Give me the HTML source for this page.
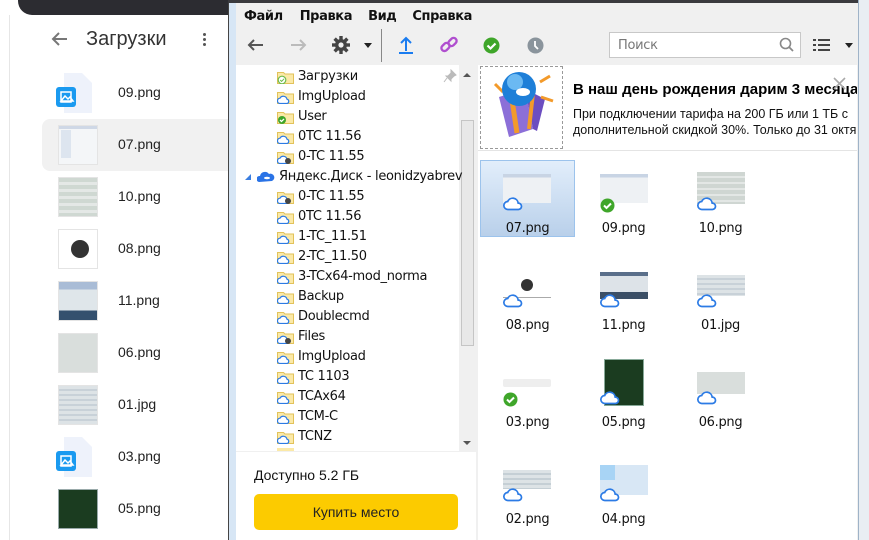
<!DOCTYPE html>
<html><head><meta charset="utf-8">
<style>
*{margin:0;padding:0;box-sizing:border-box}
body{width:869px;height:540px;overflow:hidden;background:#fff;font-family:"Liberation Sans","DejaVu Sans",sans-serif;position:relative}
.a{position:absolute}
.li{position:absolute;left:118px;font-size:14px;color:#222}
.th{position:absolute;left:58px;width:40px;height:40px;border:1px solid #e4e4e4}
.tr{position:absolute;left:298px;font-size:13px;color:#111;font-family:"DejaVu Sans",sans-serif;letter-spacing:-0.3px}
.fi{position:absolute;left:277px;width:17px;height:14px}
.gl{position:absolute;font-size:13px;color:#111;width:97px;text-align:center;font-family:"DejaVu Sans",sans-serif;letter-spacing:-0.3px}
.gt{position:absolute;width:48px}
.cb{position:absolute;width:20px;height:16px}
</style></head><body>
<div class="a" style="left:18px;top:0;width:212px;height:15px;background:#2c2c31;border-bottom-left-radius:14px"></div>
<div class="a" style="left:9px;top:15px;width:1px;height:525px;background:#e6e6e6"></div>
<svg class="a" style="left:50px;top:30px" width="20" height="18"><path d="M17 9H3M9 3L3 9l6 6" stroke="#777" stroke-width="2" fill="none"/></svg>
<div class="a" style="left:86px;top:28px;font-size:20px;color:#333">Загрузки</div>
<div class="a" style="left:203px;top:33px;width:3px;height:3px;background:#555;border-radius:2px;box-shadow:0 5px #555,0 10px #555"></div>
<div class="a" style="left:42px;top:119px;width:188px;height:52px;background:#f1f1f1;border-radius:8px 0 0 8px"></div>
<svg class="a" style="left:56px;top:73px" width="40" height="40"><path d="M8 0h18l10 10v30H8z" fill="#eef2fb"/><rect x="0" y="14" width="20" height="20" rx="3" fill="#1a9af0"/><path d="M5 28l4-5 3 3 2-2 3 4z M5 19h10v10H5z" fill="none" stroke="#fff" stroke-width="1.5"/></svg>
<div class="th" style="top:125px;background:linear-gradient(#cfd8e6 0 8%,#f4f6f8 8%);"><div style="margin:4px 2px;width:10px;height:28px;background:#dde5ef"></div></div>
<div class="th" style="top:177px;background:repeating-linear-gradient(#cfd8d2 0 4px,#e4e8e6 4px 7px)"></div>
<div class="th" style="top:229px;background:#fff"><div style="margin:10px 12px;width:18px;height:18px;border-radius:50%;background:#333"></div></div>
<div class="th" style="top:281px;background:linear-gradient(#a9bcd6 0 20%,#dfe6ea 20% 75%,#34506e 75%)"></div>
<div class="th" style="top:333px;background:#d9dedc"></div>
<div class="th" style="top:385px;background:repeating-linear-gradient(#dde3e6 0 3px,#c8d1d8 3px 5px)"></div>
<svg class="a" style="left:56px;top:437px" width="40" height="40"><path d="M8 0h18l10 10v30H8z" fill="#eef2fb"/><rect x="0" y="14" width="20" height="20" rx="3" fill="#1a9af0"/><path d="M5 28l4-5 3 3 2-2 3 4z M5 19h10v10H5z" fill="none" stroke="#fff" stroke-width="1.5"/></svg>
<div class="th" style="top:489px;background:#1b3c20;border-color:#9aa"></div>
<div class="li" style="top:84px">09.png</div>
<div class="li" style="top:136px">07.png</div>
<div class="li" style="top:188px">10.png</div>
<div class="li" style="top:240px">08.png</div>
<div class="li" style="top:292px">11.png</div>
<div class="li" style="top:344px">06.png</div>
<div class="li" style="top:396px">01.jpg</div>
<div class="li" style="top:448px">03.png</div>
<div class="li" style="top:500px">05.png</div>

<div class="a" style="left:228px;top:0;width:641px;height:540px;background:#d7e6f5;border-left:1px solid #444"></div>
<div class="a" style="left:228px;top:0;width:641px;height:3px;background:#3a3a3e"></div>
<div class="a" style="left:236px;top:3px;width:622px;height:537px;background:#f0f0f0"></div>
<div class="a" style="left:858px;top:0;width:11px;height:540px;background:#e9eef3;border-left:1px solid #9fb3c8"></div>
<div class="a" style="left:244px;top:9px;font-size:13px;font-weight:bold;color:#111;font-family:'DejaVu Sans',sans-serif;letter-spacing:-0.4px">Файл<span style="margin-left:17px">Правка</span><span style="margin-left:16px">Вид</span><span style="margin-left:16px">Справка</span></div>
<svg class="a" style="left:246px;top:37px" width="20" height="16"><path d="M17 8H3M8 3L3 8l5 5" stroke="#555" stroke-width="2" fill="none"/></svg>
<svg class="a" style="left:288px;top:37px" width="20" height="16"><path d="M3 8h14M12 3l5 5-5 5" stroke="#bbb" stroke-width="2" fill="none"/></svg>
<svg class="a" style="left:331px;top:35px" width="20" height="20"><g fill="#444"><circle cx="10" cy="10" r="6"/><rect x="8.3" y="1" width="3.4" height="18"/><rect x="1" y="8.3" width="18" height="3.4"/><rect x="8.3" y="1" width="3.4" height="18" transform="rotate(45 10 10)"/><rect x="8.3" y="1" width="3.4" height="18" transform="rotate(-45 10 10)"/></g><circle cx="10" cy="10" r="2.6" fill="#f0f0f0"/></svg>
<div class="a" style="left:364px;top:43px;border:4px solid transparent;border-top:5px solid #222"></div>
<div class="a" style="left:381px;top:29px;width:1px;height:33px;background:#888"></div>
<svg class="a" style="left:397px;top:35px" width="18" height="20"><path d="M9 16V3M4 8l5-5 5 5" stroke="#1a7cf0" stroke-width="2" fill="none"/><rect x="2" y="17" width="14" height="2" fill="#1a7cf0"/></svg>
<svg class="a" style="left:439px;top:35px" width="20" height="20"><g stroke="#b04fcf" stroke-width="2.4" fill="none"><rect x="2" y="9" width="9" height="6" rx="3" transform="rotate(-45 6.5 12)"/><rect x="9" y="4" width="9" height="6" rx="3" transform="rotate(-45 13.5 7)"/></g></svg>
<svg class="a" style="left:483px;top:37px" width="17" height="17"><circle cx="8.5" cy="8.5" r="8" fill="#3fa62a"/><path d="M4.5 8.5l3 3 5-5" stroke="#fff" stroke-width="2.2" fill="none"/></svg>
<svg class="a" style="left:527px;top:37px" width="17" height="17"><circle cx="8.5" cy="8.5" r="8" fill="#8a949c"/><path d="M8 4v5l3 3" stroke="#fff" stroke-width="1.8" fill="none"/></svg>
<div class="a" style="left:609px;top:32px;width:192px;height:26px;background:#fff;border:1px solid #c8c8c8"></div>
<div class="a" style="left:618px;top:38px;font-size:13px;color:#777;font-family:'DejaVu Sans',sans-serif;letter-spacing:-0.3px">Поиск</div>
<svg class="a" style="left:779px;top:37px" width="16" height="16"><circle cx="6.5" cy="6.5" r="5" stroke="#888" stroke-width="1.6" fill="none"/><path d="M10 10l4 4" stroke="#888" stroke-width="1.8"/></svg>
<svg class="a" style="left:813px;top:39px" width="18" height="13"><g fill="#444"><rect x="0" y="0" width="3" height="2"/><rect x="5" y="0" width="12" height="2"/><rect x="0" y="5" width="3" height="2"/><rect x="5" y="5" width="12" height="2"/><rect x="0" y="10" width="3" height="2"/><rect x="5" y="10" width="12" height="2"/></g></svg>
<div class="a" style="left:845px;top:43px;border:4px solid transparent;border-top:5px solid #222"></div>

<div class="a" style="left:236px;top:65px;width:240px;height:386px;background:#fff"></div>
<div class="a" style="left:459px;top:65px;width:17px;height:386px;background:#f0f0f0"></div>
<div class="a" style="left:461px;top:120px;width:13px;height:226px;background:#e8e8e8;border:1px solid #c5c5c5"></div>
<div class="a" style="left:463px;top:73px;border:4px solid transparent;border-bottom:4px solid #555;border-top:0"></div>
<div class="a" style="left:463px;top:441px;border:4px solid transparent;border-top:4px solid #555;border-bottom:0"></div>
<svg class="a" style="left:443px;top:69px" width="14" height="14"><path d="M8 1l5 5-2 1-3 3 0 2-5-5 2 0 3-3z M4 9l-3 4" fill="#bbb" stroke="#bbb"/></svg>

<svg width="0" height="0" style="position:absolute"><defs>
<g id="fd"><path d="M0.5 2.5h6l1.5 1.5h8.5v9.5h-16z" fill="#fbe9a7" stroke="#e2c25a"/></g>
<g id="cl"><path d="M2.5 13.5a2.7 2.7 0 0 1 .5-5.3 3.8 3.8 0 0 1 7 1 2.2 2.2 0 0 1 0 4.3z" fill="#fff" stroke="#2c7be5" stroke-width="1.2"/></g>
<g id="bc"><path d="M5 14.5a4 4 0 0 1-.3-8 5.5 5.5 0 0 1 10.5 1.6 3.2 3.2 0 0 1 .2 6.4z" fill="#fff" stroke="#2c7be5" stroke-width="1.7"/></g>
</defs></svg>

<svg class="fi" style="top:70px" viewBox="0 0 17 14"><use href="#fd"/><circle cx="5" cy="10" r="3.8" fill="#fff" stroke="#6dbb4c" stroke-width="1.2"/><path d="M3.2 10l1.4 1.4 2.5-2.6" stroke="#6dbb4c" fill="none"/></svg>
<div class="tr" style="top:69px">Загрузки</div>
<svg class="fi" style="top:90px" viewBox="0 0 17 14"><use href="#fd"/><use href="#cl"/></svg>
<div class="tr" style="top:89px">ImgUpload</div>
<svg class="fi" style="top:110px" viewBox="0 0 17 14"><use href="#fd"/><circle cx="5" cy="10" r="4" fill="#3fa62a"/><path d="M3 10l1.5 1.5 2.5-2.6" stroke="#fff" stroke-width="1.3" fill="none"/></svg>
<div class="tr" style="top:109px">User</div>
<svg class="fi" style="top:130px" viewBox="0 0 17 14"><use href="#fd"/><use href="#cl"/></svg>
<div class="tr" style="top:129px">0TC 11.56</div>
<svg class="fi" style="top:150px" viewBox="0 0 17 14"><use href="#fd"/><use href="#cl"/><circle cx="11" cy="11" r="3" fill="#444"/></svg>
<div class="tr" style="top:149px">0-TC 11.55</div>
<div class="a" style="left:245px;top:174px;border:3px solid transparent;border-right:3px solid #3b7ee0;border-bottom:3px solid #3b7ee0"></div>
<svg class="a" style="left:257px;top:170px" width="18" height="14"><path d="M2 12a3 3 0 0 1 1-6 5 5 0 0 1 9-2 3.5 3.5 0 0 1 3 7z" fill="#2a73e6"/><ellipse cx="10" cy="8" rx="3" ry="1.3" fill="#fff"/></svg>
<div class="a" style="left:279px;top:169px;font-size:13px;color:#111;font-family:'DejaVu Sans',sans-serif;letter-spacing:-0.3px">Яндекс.Диск - leonidzyabrev</div>

<svg class="fi" style="top:190px" viewBox="0 0 17 14"><use href="#fd"/><use href="#cl"/><circle cx="11" cy="11" r="3" fill="#444"/></svg>
<div class="tr" style="top:189px">0-TC 11.55</div>
<svg class="fi" style="top:210px" viewBox="0 0 17 14"><use href="#fd"/><use href="#cl"/></svg>
<div class="tr" style="top:209px">0TC 11.56</div>
<svg class="fi" style="top:230px" viewBox="0 0 17 14"><use href="#fd"/><use href="#cl"/></svg>
<div class="tr" style="top:229px">1-TC_11.51</div>
<svg class="fi" style="top:250px" viewBox="0 0 17 14"><use href="#fd"/><use href="#cl"/></svg>
<div class="tr" style="top:249px">2-TC_11.50</div>
<svg class="fi" style="top:270px" viewBox="0 0 17 14"><use href="#fd"/><use href="#cl"/></svg>
<div class="tr" style="top:269px">3-TCx64-mod_norma</div>
<svg class="fi" style="top:290px" viewBox="0 0 17 14"><use href="#fd"/><use href="#cl"/></svg>
<div class="tr" style="top:289px">Backup</div>
<svg class="fi" style="top:310px" viewBox="0 0 17 14"><use href="#fd"/><use href="#cl"/></svg>
<div class="tr" style="top:309px">Doublecmd</div>
<svg class="fi" style="top:330px" viewBox="0 0 17 14"><use href="#fd"/><use href="#cl"/><circle cx="11" cy="11" r="3" fill="#444"/></svg>
<div class="tr" style="top:329px">Files</div>
<svg class="fi" style="top:350px" viewBox="0 0 17 14"><use href="#fd"/><use href="#cl"/></svg>
<div class="tr" style="top:349px">ImgUpload</div>
<svg class="fi" style="top:370px" viewBox="0 0 17 14"><use href="#fd"/><use href="#cl"/></svg>
<div class="tr" style="top:369px">TC 1103</div>
<svg class="fi" style="top:390px" viewBox="0 0 17 14"><use href="#fd"/><use href="#cl"/></svg>
<div class="tr" style="top:389px">TCAx64</div>
<svg class="fi" style="top:410px" viewBox="0 0 17 14"><use href="#fd"/><use href="#cl"/></svg>
<div class="tr" style="top:409px">TCM-C</div>
<svg class="fi" style="top:430px" viewBox="0 0 17 14"><use href="#fd"/><use href="#cl"/></svg>
<div class="tr" style="top:429px">TCNZ</div>
<div class="a" style="left:277px;top:448px;width:17px;height:3px;background:#fbe9a7"></div>

<div class="a" style="left:236px;top:452px;width:240px;height:88px;background:#fff"></div>
<div class="a" style="left:254px;top:467px;font-size:14px;color:#111">Доступно 5.2 ГБ</div>
<div class="a" style="left:254px;top:494px;width:204px;height:36px;background:#fccb00;border-radius:5px;font-size:14px;color:#222;text-align:center;line-height:36px">Купить место</div>

<div class="a" style="left:478px;top:65px;width:379px;height:475px;background:#fff"></div>
<div class="a" style="left:480px;top:66px;width:83px;height:83px;border:1px dashed #999"></div>
<svg class="a" style="left:485px;top:67px" width="76" height="80">
<path d="M14 30l26-8 8 40-24 8z" fill="#8c6fd8"/><path d="M40 22l20 10-8 32-4-2z" fill="#6c4ec0"/>
<path d="M26 26l6 40" stroke="#f39a2a" stroke-width="5"/><path d="M48 26l-4 36" stroke="#f39a2a" stroke-width="4"/>
<path d="M18 25l-8-8M55 15l10-6M56 30l12 4" stroke="#f39a2a" stroke-width="3"/>
<circle cx="34" cy="22" r="17" fill="#1e7fd8"/><circle cx="30" cy="15" r="8" fill="#6bb9f2"/><ellipse cx="38" cy="25" rx="7" ry="4" fill="#fff"/></svg>
<div class="a" style="left:573px;top:81px;width:284px;overflow:hidden;white-space:nowrap;font-size:15px;font-weight:bold;color:#000">В наш день рождения дарим 3 месяца</div>
<div class="a" style="left:573px;top:106px;width:284px;overflow:hidden;white-space:nowrap;font-size:12.5px;color:#111;line-height:16px">При подключении тарифа на 200 ГБ или 1 ТБ с<br>дополнительной скидкой 30%. Только до 31 октября</div>
<svg class="a" style="left:833px;top:77px" width="13" height="13"><path d="M1 1l11 11M12 1L1 12" stroke="#aaa" stroke-width="1.6"/></svg>
<div class="a" style="left:478px;top:150px;width:379px;height:1px;background:#e4e4e4"></div>

<div class="a" style="left:480px;top:160px;width:95px;height:77px;border:1px solid #9cc3ec;background:linear-gradient(#e2eefb,#b9d0ea)"></div>
<div class="gt" style="left:503px;top:174px;height:29px;background:linear-gradient(#c8d4e4 0 12%,#eef1f4 12%)"></div>
<div class="gt" style="left:600px;top:174px;height:29px;background:linear-gradient(#c8d4e4 0 12%,#eef1f4 12%)"></div>
<div class="gt" style="left:697px;top:172px;height:32px;background:repeating-linear-gradient(#cfd6d2 0 4px,#e3e7e5 4px 6px)"></div>
<div class="gt" style="left:503px;top:273px;height:25px;background:#fff;border-bottom:1px solid #aaa"><div style="margin:6px 18px;width:12px;height:12px;border-radius:50%;background:#333"></div></div>
<div class="gt" style="left:600px;top:272px;height:27px;background:linear-gradient(#5a6f8a 0 15%,#dde3e8 15% 75%,#3b4f66 75%)"></div>
<div class="gt" style="left:697px;top:275px;height:21px;background:repeating-linear-gradient(#dde3e6 0 3px,#c8d1d8 3px 5px)"></div>
<div class="gt" style="left:503px;top:379px;height:8px;background:#eee;border-radius:2px"></div>
<div class="gt" style="left:604px;top:359px;width:40px;height:47px;background:#1b3c20;border:1px solid #8a9"></div>
<div class="gt" style="left:697px;top:372px;height:22px;background:#d9dedc"></div>
<div class="gt" style="left:503px;top:470px;height:19px;background:repeating-linear-gradient(#dde3e6 0 3px,#c5cfd5 3px 5px)"></div>
<div class="gt" style="left:600px;top:465px;height:30px;background:#d8e7f5"><div style="width:15px;height:15px;background:#a8d4f5"></div></div>
<svg class="cb" style="left:503px;top:195px"><use href="#bc"/></svg>
<svg class="a" style="left:600px;top:198px" width="15" height="15"><circle cx="7.5" cy="7.5" r="7" fill="#3fa62a"/><path d="M4 7.5l2.5 2.5 4.5-4.5" stroke="#fff" stroke-width="2" fill="none"/></svg>
<svg class="cb" style="left:697px;top:195px"><use href="#bc"/></svg>
<svg class="cb" style="left:503px;top:292px"><use href="#bc"/></svg>
<svg class="cb" style="left:600px;top:292px"><use href="#bc"/></svg>
<svg class="cb" style="left:697px;top:292px"><use href="#bc"/></svg>
<svg class="a" style="left:503px;top:392px" width="15" height="15"><circle cx="7.5" cy="7.5" r="7" fill="#3fa62a"/><path d="M4 7.5l2.5 2.5 4.5-4.5" stroke="#fff" stroke-width="2" fill="none"/></svg>
<svg class="cb" style="left:600px;top:389px"><use href="#bc"/></svg>
<svg class="cb" style="left:697px;top:389px"><use href="#bc"/></svg>
<svg class="cb" style="left:503px;top:486px"><use href="#bc"/></svg>
<svg class="cb" style="left:600px;top:486px"><use href="#bc"/></svg>
<div class="gl" style="left:479px;top:221px">07.png</div>
<div class="gl" style="left:575px;top:221px">09.png</div>
<div class="gl" style="left:672px;top:221px">10.png</div>
<div class="gl" style="left:479px;top:318px">08.png</div>
<div class="gl" style="left:575px;top:318px">11.png</div>
<div class="gl" style="left:672px;top:318px">01.jpg</div>
<div class="gl" style="left:479px;top:415px">03.png</div>
<div class="gl" style="left:575px;top:415px">05.png</div>
<div class="gl" style="left:672px;top:415px">06.png</div>
<div class="gl" style="left:479px;top:512px">02.png</div>
<div class="gl" style="left:575px;top:512px">04.png</div>
</body></html>
